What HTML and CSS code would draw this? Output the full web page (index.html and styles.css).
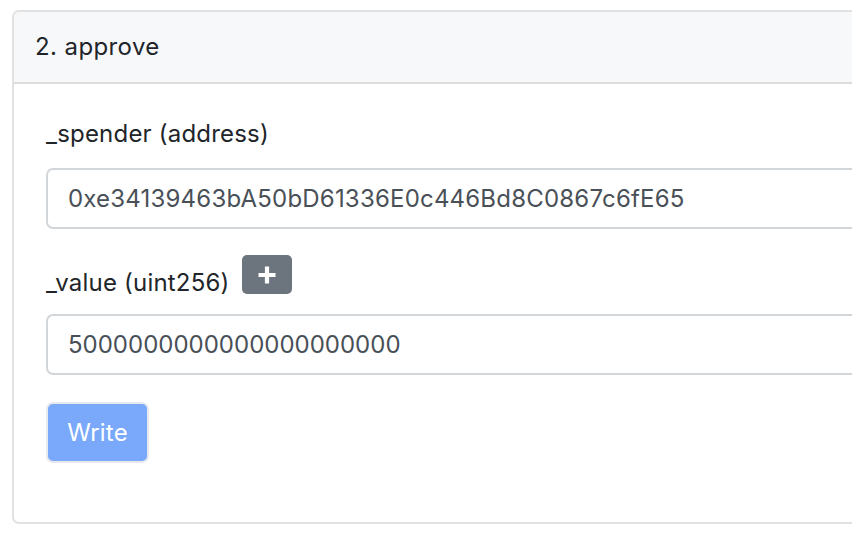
FILE: index.html
```html
<!DOCTYPE html>
<html>
<head>
<meta charset="utf-8">
<link rel="stylesheet" href="styles.css">
</head>
<body>
<div class="page">
  <div class="card">
    <div class="card-header">2. approve</div>
    <div class="card-body">
      <label class="label">_spender (address)</label>
      <div class="input">0xe34139463bA50bD61336E0c446Bd8C0867c6fE65</div>
      <div class="label-row">
        <label class="label">_value (uint256)</label>
        <button class="btn-plus" type="button" aria-label="add">
          <svg class="plus-icon" width="20" height="20" viewBox="0 0 20 20"><path d="M10 1.5v17M1.5 10h17" stroke="#fff" stroke-width="4.2"/></svg>
        </button>
      </div>
      <div class="input input-num">5000000000000000000000</div>
      <button class="btn-write" type="button">Write</button>
    </div>
  </div>
</div>
</body>
</html>
```

FILE: styles.css
```css
html, body {
  margin: 0;
  padding: 0;
  overflow: hidden;
  background: #fff;
}
.page {
  padding: 10px 0 0 12px;
  width: 1100px;
  font-family: Inter, "Liberation Sans", Arial, sans-serif;
  font-size: 24px;
  letter-spacing: 0.2px;
  color: #212529;
}
.card {
  width: 1000px;
  border: 2px solid #e2e2e2;
  border-radius: 7px;
  overflow: hidden;
  box-sizing: border-box;
}
.card-header {
  background: #f7f8f9;
  border-bottom: 2px solid #dcdcdc;
  height: 70px;
  line-height: 70px;
  padding-left: 21px;
  font-size: 24px;
  letter-spacing: 0.4px;
}
.card-body {
  padding: 32px 0 59px 32px;
  display: flex;
  flex-direction: column;
  align-items: flex-start;
}
.label {
  display: block;
  line-height: 36px;
  height: 36px;
}
.input {
  box-sizing: border-box;
  width: 900px;
  height: 61px;
  line-height: 57px;
  border: 2px solid #d3d6d9;
  border-radius: 7px;
  padding-left: 20px;
  color: #495057;
  margin-top: 16px;
}
.input-num {
  letter-spacing: 0;
}
.label-row {
  display: flex;
  align-items: flex-start;
  margin-top: 26px;
  height: 45px;
}
.label-row .label {
  margin-top: 10px;
}
.btn-plus {
  margin-left: 12px;
  width: 50px;
  height: 39px;
  border: none;
  border-radius: 5px;
  background: #6c757d;
  padding: 0;
  display: flex;
  align-items: center;
  justify-content: center;
}
.plus-icon {
  display: block;
  flex: none;
}
.label-row + .input {
  margin-top: 14px;
}
.btn-write {
  margin-top: 27px;
  box-sizing: border-box;
  width: 103px;
  height: 61px;
  background: #7aa8fa;
  border: 2px solid #e6e9ee;
  border-radius: 7px;
  color: #fff;
  font-family: Inter, "Liberation Sans", Arial, sans-serif;
  font-size: 24px;
  letter-spacing: 0.2px;
  padding: 0;
}
```
